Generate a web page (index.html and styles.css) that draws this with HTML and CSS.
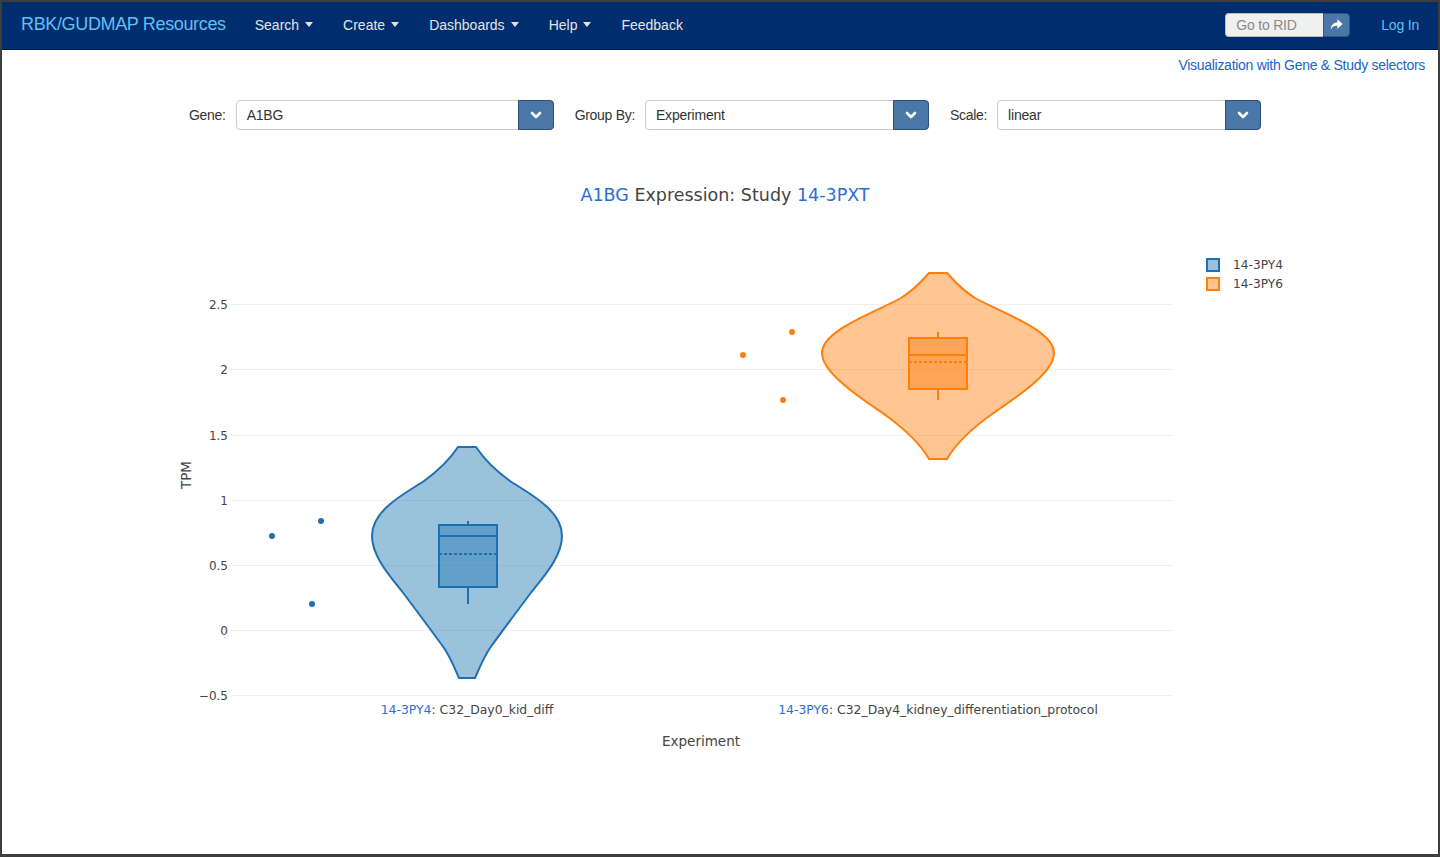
FILE: index.html
```html
<!DOCTYPE html>
<html>
<head>
<meta charset="utf-8">
<title>RBK/GUDMAP Resources</title>
<link rel="stylesheet" href="styles.css">
</head>
<body>
<div class="frame">
  <nav class="navbar">
    <a class="brand">RBK/GUDMAP Resources</a>
    <ul class="nav">
      <li>Search <span class="caret"></span></li>
      <li>Create <span class="caret"></span></li>
      <li>Dashboards <span class="caret"></span></li>
      <li>Help <span class="caret"></span></li>
      <li>Feedback</li>
    </ul>
    <div class="nav-right">
      <div class="rid">
        <span class="rid-input">Go to RID</span>
        <span class="rid-btn"><svg width="15" height="15" viewBox="0 0 16 16"><path d="M9 2.5 L14.5 7.5 L9 12.5 V9.4 C5.6 9.4 3.4 10.4 1.8 13.2 C2.2 8.8 4.8 6.1 9 5.7 Z" fill="#fff"/></svg></span>
      </div>
      <a class="login">Log In</a>
    </div>
  </nav>
  <div class="toplink"><a>Visualization with Gene &amp; Study selectors</a></div>
  <div class="selectors">
    <label class="sel-label">Gene:</label>
    <div class="select w-gene"><span class="val">A1BG</span><span class="sel-btn"><svg width="14" height="14" viewBox="0 0 14 14"><path d="M3 5 L7 9 L11 5" fill="none" stroke="#fff" stroke-width="2.6" stroke-linecap="round" stroke-linejoin="round"/></svg></span></div>
    <label class="sel-label gap">Group By:</label>
    <div class="select w-group"><span class="val">Experiment</span><span class="sel-btn"><svg width="14" height="14" viewBox="0 0 14 14"><path d="M3 5 L7 9 L11 5" fill="none" stroke="#fff" stroke-width="2.6" stroke-linecap="round" stroke-linejoin="round"/></svg></span></div>
    <label class="sel-label gap">Scale:</label>
    <div class="select w-scale"><span class="val">linear</span><span class="sel-btn"><svg width="14" height="14" viewBox="0 0 14 14"><path d="M3 5 L7 9 L11 5" fill="none" stroke="#fff" stroke-width="2.6" stroke-linecap="round" stroke-linejoin="round"/></svg></span></div>
  </div>
  <svg class="chart" width="1436" height="700" viewBox="0 0 1436 700">
    <g transform="translate(-2,-130)">
      <text class="title" x="725" y="201" text-anchor="middle"><tspan class="hl">A1BG</tspan> Expression: Study <tspan class="hl">14-3PXT</tspan></text>
      <g class="grid">
        <line x1="231" x2="1173" y1="304.5" y2="304.5"/>
        <line x1="231" x2="1173" y1="369.5" y2="369.5"/>
        <line x1="231" x2="1173" y1="435.5" y2="435.5"/>
        <line x1="231" x2="1173" y1="500.5" y2="500.5"/>
        <line x1="231" x2="1173" y1="565.5" y2="565.5"/>
        <line x1="231" x2="1173" y1="630.5" y2="630.5"/>
        <line x1="231" x2="1173" y1="695.5" y2="695.5"/>
      </g>
      <g class="ytick" text-anchor="end">
        <text x="228" y="309">2.5</text>
        <text x="228" y="374">2</text>
        <text x="228" y="440">1.5</text>
        <text x="228" y="505">1</text>
        <text x="228" y="570">0.5</text>
        <text x="228" y="635">0</text>
        <text x="228" y="700">−0.5</text>
      </g>
      <text class="axtitle" transform="translate(191,475) rotate(-90)" text-anchor="middle">TPM</text>
      <text class="xtick" x="467" y="714" text-anchor="middle"><tspan class="hl">14-3PY4</tspan>: C32_Day0_kid_diff</text>
      <text class="xtick" x="938" y="714" text-anchor="middle"><tspan class="hl">14-3PY6</tspan>: C32_Day4_kidney_differentiation_protocol</text>
      <text class="axtitle" x="701" y="746" text-anchor="middle">Experiment</text>

      <!-- blue violin -->
      <path class="v-blue" d="M458,447 L476,447 C482,456 492,468 510,481 C530,494 562,510 562,536 C562,556 545,575 530,594 C515,614 500,634 490,648 C482,660 478,672 475,678 L459,678 C456,672 452,660 444,648 C434,634 419,614 404,594 C389,575 372,556 372,536 C372,510 404,494 424,481 C442,468 452,456 458,447 Z"/>
      <line class="s-blue" x1="468" x2="468" y1="521" y2="525"/>
      <line class="s-blue" x1="468" x2="468" y1="587" y2="604"/>
      <rect class="b-blue" x="439" y="525" width="58" height="62"/>
      <line class="s-blue" x1="439" x2="497" y1="536" y2="536"/>
      <line class="s-blue dash" x1="439" x2="497" y1="554" y2="554"/>
      <circle class="p-blue" cx="272" cy="536" r="3"/>
      <circle class="p-blue" cx="321" cy="521" r="3"/>
      <circle class="p-blue" cx="312" cy="604" r="3"/>

      <!-- orange violin -->
      <path class="v-orange" d="M929,273 L947,273 C954,281 962,290 975,298 C1000,312 1054,330 1054,353 C1054,372 1020,395 995,412 C972,428 955,445 947,459 L929,459 C921,445 904,428 881,412 C856,395 822,372 822,353 C822,330 876,312 901,298 C914,290 922,281 929,273 Z"/>
      <line class="s-orange" x1="938" x2="938" y1="332" y2="338"/>
      <line class="s-orange" x1="938" x2="938" y1="389" y2="400"/>
      <rect class="b-orange" x="909" y="338" width="58" height="51"/>
      <line class="s-orange" x1="909" x2="967" y1="355" y2="355"/>
      <line class="s-orange dash" x1="909" x2="967" y1="362" y2="362"/>
      <circle class="p-orange" cx="743" cy="355" r="3"/>
      <circle class="p-orange" cx="792" cy="332" r="3"/>
      <circle class="p-orange" cx="783" cy="400" r="3"/>

      <!-- legend -->
      <rect class="l-blue" x="1207" y="259" width="12" height="12"/>
      <text class="legend" x="1233" y="269">14-3PY4</text>
      <rect class="l-orange" x="1207" y="278" width="12" height="12"/>
      <text class="legend" x="1233" y="288">14-3PY6</text>
    </g>
  </svg>
</div>
</body>
</html>
```

FILE: styles.css
```css
* { box-sizing: border-box; }
html, body { margin: 0; padding: 0; background: #fff; }
body { font-family: "Liberation Sans", Arial, sans-serif; font-size: 14px; color: #333; }

.frame {
  width: 1440px;
  height: 857px;
  border: 2px solid #3d3d3d;
  border-bottom-width: 3px;
  overflow: hidden;
}

.navbar {
  height: 48px;
  background: #002d6e;
  border-bottom: 1px solid #001c48;
  display: flex;
  align-items: center;
  padding: 0 19px 2px 19px;
}
.brand {
  color: #62bff2;
  font-size: 18px;
  letter-spacing: -0.35px;
}
.nav {
  list-style: none;
  margin: 0 0 0 14px;
  padding: 0;
  display: flex;
}
.nav li {
  color: #e4e4e4;
  font-size: 14px;
  padding: 0 15px;
  display: flex;
  align-items: center;
}
.caret {
  display: inline-block;
  width: 0; height: 0;
  border-left: 4.5px solid transparent;
  border-right: 4.5px solid transparent;
  border-top: 5px solid #e4e4e4;
  margin-left: 6px;
}
.nav-right {
  margin-left: auto;
  display: flex;
  align-items: center;
}
.rid { display: flex; height: 24px; }
.rid-input {
  width: 98px;
  background: #f0f0f0;
  border: 1px solid #bbb;
  border-right: none;
  border-radius: 4px 0 0 4px;
  color: #8a8a8a;
  font-size: 14px;
  letter-spacing: -0.2px;
  line-height: 22px;
  padding-left: 10px;
}
.rid-btn {
  width: 27px;
  background: #4a77a8;
  border: 1px solid #2d5685;
  border-radius: 0 4px 4px 0;
  display: flex;
  align-items: center;
  justify-content: center;
}
.login {
  color: #62bff2;
  font-size: 14px;
  letter-spacing: -0.2px;
  margin-left: 31px;
}

.toplink {
  text-align: right;
  padding-right: 13px;
  margin-top: 5px;
  height: 20px;
  line-height: 20px;
}
.toplink a { color: #1b63c6; font-size: 14px; letter-spacing: -0.28px; }

.selectors {
  display: flex;
  align-items: center;
  margin-top: 25px;
  padding-left: 187px;
  height: 30px;
}
.sel-label { color: #333; font-size: 14px; letter-spacing: -0.3px; margin-right: 10px; }
.sel-label.gap { margin-left: 21px; }
.select {
  height: 30px;
  display: flex;
  border: 1px solid #ccc;
  border-radius: 4px;
  background: #fff;
}
.w-gene { width: 318px; }
.w-group { width: 284px; }
.w-scale { width: 264px; }
.select .val {
  flex: 1;
  line-height: 28px;
  padding-left: 10px;
  color: #333;
  font-size: 14px;
  letter-spacing: -0.2px;
}
.sel-btn {
  width: 36px;
  margin: -1px -1px -1px 0;
  background: #4a76a8;
  border: 1px solid #2b4f78;
  border-radius: 0 4px 4px 0;
  display: flex;
  align-items: center;
  justify-content: center;
}

.chart { display: block; }
.chart text { font-family: "DejaVu Sans", Verdana, sans-serif; fill: #444; }
.title { font-size: 17.5px; }
.chart .hl { fill: #2a6ed8; }
.grid line { stroke: #eee; stroke-width: 1; }
.ytick text { font-size: 12px; }
.xtick { font-size: 12.4px; }
.axtitle { font-size: 13.5px; }
.legend { font-size: 12.2px; }

.v-blue { fill: rgba(31,119,180,0.45); stroke: #1f70b0; stroke-width: 2; }
.b-blue { fill: rgba(31,119,180,0.45); stroke: #1f70b0; stroke-width: 2; }
.s-blue { stroke: #1f70b0; stroke-width: 2; }
.p-blue { fill: #1f70b0; }
.v-orange { fill: rgba(255,127,14,0.45); stroke: #ff7f0e; stroke-width: 2; }
.b-orange { fill: rgba(255,127,14,0.45); stroke: #ff7f0e; stroke-width: 2; }
.s-orange { stroke: #ff7f0e; stroke-width: 2; }
.p-orange { fill: #ff7f0e; }
.dash { stroke-dasharray: 3 2; }
.l-blue { fill: rgba(31,119,180,0.45); stroke: #1f70b0; stroke-width: 2; }
.l-orange { fill: rgba(255,127,14,0.45); stroke: #ff7f0e; stroke-width: 2; }
```
